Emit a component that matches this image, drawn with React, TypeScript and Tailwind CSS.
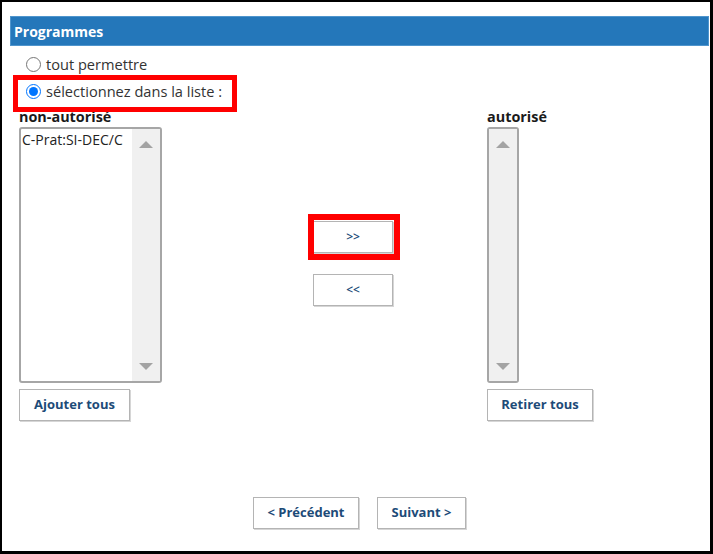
import React from "react";

function Arrow({ up }: { up?: boolean }) {
  return (
    <svg width="14" height="7" viewBox="0 0 14 7" className="block">
      <path d={up ? "M0 7 L7 0 L14 7 Z" : "M0 0 L7 7 L14 0 Z"} fill="#a3a3a3" />
    </svg>
  );
}

function Scrollbar() {
  return (
    <div className="w-[28px] h-full bg-[#f0f0f0] flex flex-col items-center justify-between pt-[12px] pb-[11px]">
      <Arrow up />
      <Arrow />
    </div>
  );
}

function Radio({ checked }: { checked?: boolean }) {
  return checked ? (
    <span className="w-[15px] h-[15px] rounded-full border-[1.5px] border-[#0075ff] bg-white flex items-center justify-center shrink-0">
      <span className="w-[9px] h-[9px] rounded-full bg-[#0075ff]" />
    </span>
  ) : (
    <span className="w-[15px] h-[15px] rounded-full border border-[#767676] bg-white shrink-0" />
  );
}

function Btn({ label, w, small }: { label: string; w: string; small?: boolean }) {
  return (
    <button
      className={`${w} h-[32px] bg-white border border-[#b4b4b4] shadow-[1px_1px_0_#d6d6d6] text-[#1d4b78] ${
        small ? "text-[12px] font-semibold" : "text-[13px] font-bold"
      }`}
    >
      {label}
    </button>
  );
}

export default function App() {
  return (
    <div className="w-[713px] h-[554px] bg-white border-black border-l-2 border-t-2 border-r-[3px] border-b-[3px] font-['Open_Sans',sans-serif] text-[#222]">
      <div className="ml-2 mr-[1px] mt-[14px] h-[30px] bg-[#2477ba] border border-[#4f95cd] flex items-center pl-[3px]">
        <span className="text-white font-bold text-[14px]">Programmes</span>
      </div>

      <div className="relative mt-[5px] pl-[24px] text-[14.6px] text-[#333]">
        <div className="h-[27px] flex items-center gap-[5px]">
          <Radio />
          <span>tout permettre</span>
        </div>
        <div className="relative h-[27px] flex items-center gap-[5px]">
          <Radio checked />
          <span>sélectionnez dans la liste :</span>
          <div className="absolute left-[-13px] top-[-3px] w-[224px] h-[37px] border-[5px] border-[#ff0000]" />
        </div>
      </div>

      <div className="mt-[2px] pl-[17px] flex">
        <div className="w-[143px]">
          <div className="h-[20px] text-[14.4px] font-bold text-[#1a1a1a] leading-[20px]">non-autorisé</div>
          <div className="h-[256px] border-2 border-[#a6a6a6] rounded-[3px] flex">
            <div className="flex-1 overflow-hidden whitespace-nowrap text-[14px] pl-[1px] pt-[1px] leading-[20px]">
              C-Prat:SI-DEC/C
            </div>
            <Scrollbar />
          </div>
          <div className="mt-[6px]">
            <Btn label="Ajouter tous" w="w-[111px]" />
          </div>
        </div>

        <div className="ml-[151px] w-[80px] pt-[114px] flex flex-col gap-[21px]">
          <div className="relative">
            <Btn label=">>" w="w-[80px]" small />
            <div className="absolute left-[-5px] top-[-7px] right-[-7px] bottom-[-7px] border-[6px] border-[#ff0000]" />
          </div>
          <Btn label="<<" w="w-[80px]" small />
        </div>

        <div className="ml-[94px]">
          <div className="h-[20px] text-[14.4px] font-bold text-[#1a1a1a] leading-[20px]">autorisé</div>
          <div className="w-[32px] h-[256px] border-2 border-[#a6a6a6] rounded-[3px] flex">
            <Scrollbar />
          </div>
          <div className="mt-[6px]">
            <Btn label="Retirer tous" w="w-[106px]" />
          </div>
        </div>
      </div>

      <div className="mt-[76px] pl-[251px] flex gap-[18px]">
        <Btn label="< Précédent" w="w-[106px]" />
        <Btn label="Suivant >" w="w-[89px]" />
      </div>
    </div>
  );
}
